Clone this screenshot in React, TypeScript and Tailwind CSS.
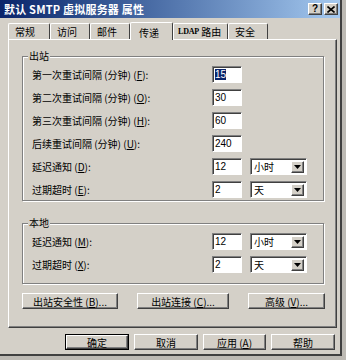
const raised =
  "border border-t-white border-l-white border-r-[#404040] border-b-[#404040] shadow-[inset_-1px_-1px_0_#808080] bg-[#d4d0c8]";
const sunken =
  "border border-t-[#808080] border-l-[#808080] border-r-white border-b-white shadow-[inset_1px_1px_0_#404040] bg-white";

const Key = ({ k }: { k: string }) => <span className="underline">{k}</span>;

const Field = ({ value, selected }: { value: string; selected?: boolean }) => (
  <div className={`${sunken} w-[30px] h-[17px] flex items-center pl-[2px] text-[10px] font-['Liberation_Sans'] text-black`}>
    <span className={selected ? "bg-[#0a246a] text-white leading-[11px]" : ""}>{value}</span>
  </div>
);

const Combo = ({ value }: { value: string }) => (
  <div className={`${sunken} ml-[8px] w-[57px] h-[17px] flex items-center justify-between pl-[3px] pr-[2px]`}>
    <span className="text-[10px] text-black">{value}</span>
    <div className={`${raised} w-[13px] h-[12px] flex items-center justify-center`}>
      <svg width="7" height="4" viewBox="0 0 7 4">
        <path d="M0 0h7L3.5 4z" fill="#000" />
      </svg>
    </div>
  </div>
);

const Row = ({ label, value, unit, selected }: { label: React.ReactNode; value: string; unit?: string; selected?: boolean }) => (
  <div className="flex items-center h-[17px] mb-[6px] last:mb-0">
    <div className="w-[180px] text-[10px] text-black whitespace-nowrap">{label}</div>
    <Field value={value} selected={selected} />
    {unit && <Combo value={unit} />}
  </div>
);

const Group = ({ title, children, className }: { title: string; children: React.ReactNode; className: string }) => (
  <div className={`relative w-[302px] border border-[#808080] shadow-[1px_1px_0_#fff,inset_1px_1px_0_#fff] pl-[9px] ${className}`}>
    <span className="absolute -top-[8px] left-[5px] px-[1px] bg-[#d4d0c8] text-[10px] leading-[14px] text-black">{title}</span>
    {children}
  </div>
);

const Btn = ({ children, w, def }: { children: React.ReactNode; w: string; def?: boolean }) => (
  <div className={`${def ? "border border-black" : ""} ${w} h-[16px] flex`}>
    <div className={`${raised} flex-1 flex items-center justify-center text-[10px] text-black whitespace-nowrap`}>{children}</div>
  </div>
);

const tabs: React.ReactNode[] = [
  "常规",
  "访问",
  "邮件",
  "传递",
  <>
    <span className="font-['Liberation_Serif'] text-[8px] font-bold tracking-[-0.2px]">LDAP</span>&nbsp;路由
  </>,
  "安全",
];
const tabW = ["w-[42px]", "w-[40px]", "w-[40px]", "w-[43px]", "w-[55px]", "w-[40px]"];

export default function App() {
  return (
    <div className="w-[346px] h-[360px] bg-[#bdbab4] font-['Noto_Sans_CJK_SC',sans-serif] overflow-hidden">
      <div className="w-[342px] h-[356px] bg-[#d4d0c8] border-r-2 border-b-2 border-r-[#404040] border-b-[#404040] flex flex-col">
        {/* title bar */}
        <div className="h-[18px] bg-linear-to-r from-[#0a246a] to-[#a6caf0] flex items-center justify-between pl-[4px] pr-[2px]">
          <span className="text-white font-bold text-[11px] leading-none tracking-[0.2px] whitespace-nowrap">默认 SMTP 虚拟服务器 属性</span>
          <div className="flex gap-[2px]">
            <div className={`${raised} w-[14px] h-[12px] flex items-center justify-center text-[10px] font-bold font-['Liberation_Sans'] leading-none text-black`}>?</div>
            <div className={`${raised} w-[14px] h-[12px] flex items-center justify-center`}>
              <svg width="8" height="7" viewBox="0 0 8 7">
                <path d="M0.5 0.5L7.5 6.5M7.5 0.5L0.5 6.5" stroke="#000" strokeWidth="1.6" />
              </svg>
            </div>
          </div>
        </div>

        {/* tabs */}
        <div className="flex items-end h-[21px] pl-[8px]">
          {tabs.map((t, i) =>
            i === 3 ? (
              <div key={i} className={`${tabW[i]} h-[18px] -mb-px relative z-10 bg-[#d4d0c8] border-t border-l border-r border-t-white border-l-white border-r-[#404040] rounded-t-[2px] flex items-start pt-[2px] pl-[8px] text-[10px] text-black whitespace-nowrap`}>
                {t}
              </div>
            ) : (
              <div key={i} className={`${tabW[i]} h-[16px] border-t border-l border-r border-t-white border-l-white border-r-[#404040] rounded-t-[2px] flex items-center ${i === 4 ? "pl-[4px]" : "pl-[6px]"} text-[10px] text-black whitespace-nowrap`}>
                {t}
              </div>
            )
          )}
        </div>

        {/* tab panel */}
        <div className="ml-[8px] w-[329px] h-[289px] border border-t-white border-l-white border-r-[#404040] border-b-[#404040] shadow-[inset_-1px_-1px_0_#808080] pt-[16px] pl-[13px]">
          <Group title="出站" className="h-[145px] pt-[9px]">
            <Row selected value="15" label={<>第一次重试间隔 (分钟) (<Key k="F" />):</>} />
            <Row value="30" label={<>第二次重试间隔 (分钟) (<Key k="O" />):</>} />
            <Row value="60" label={<>第三次重试间隔 (分钟) (<Key k="H" />):</>} />
            <Row value="240" label={<>后续重试间隔 (分钟) (<Key k="U" />):</>} />
            <Row value="12" unit="小时" label={<>延迟通知 (<Key k="D" />):</>} />
            <Row value="2" unit="天" label={<>过期超时 (<Key k="E" />):</>} />
          </Group>

          <Group title="本地" className="mt-[22px] h-[61px] pt-[9px]">
            <Row value="12" unit="小时" label={<>延迟通知 (<Key k="M" />):</>} />
            <Row value="2" unit="天" label={<>过期超时 (<Key k="X" />):</>} />
          </Group>

          <div className="mt-[9px] w-[303px] flex justify-between">
            <Btn w="w-[96px]">出站安全性 (<Key k="B" />)...</Btn>
            <Btn w="w-[92px]">出站连接 (<Key k="C" />)...</Btn>
            <Btn w="w-[77px]">高级 (<Key k="V" />)...</Btn>
          </div>
        </div>

        {/* dialog buttons */}
        <div className="mt-[6px] flex justify-end gap-[5px] pr-[5px]">
          <Btn w="w-[64px]" def>确定</Btn>
          <Btn w="w-[64px]">取消</Btn>
          <Btn w="w-[63px]">应用 (<Key k="A" />)</Btn>
          <Btn w="w-[64px]">帮助</Btn>
        </div>
      </div>
    </div>
  );
}
